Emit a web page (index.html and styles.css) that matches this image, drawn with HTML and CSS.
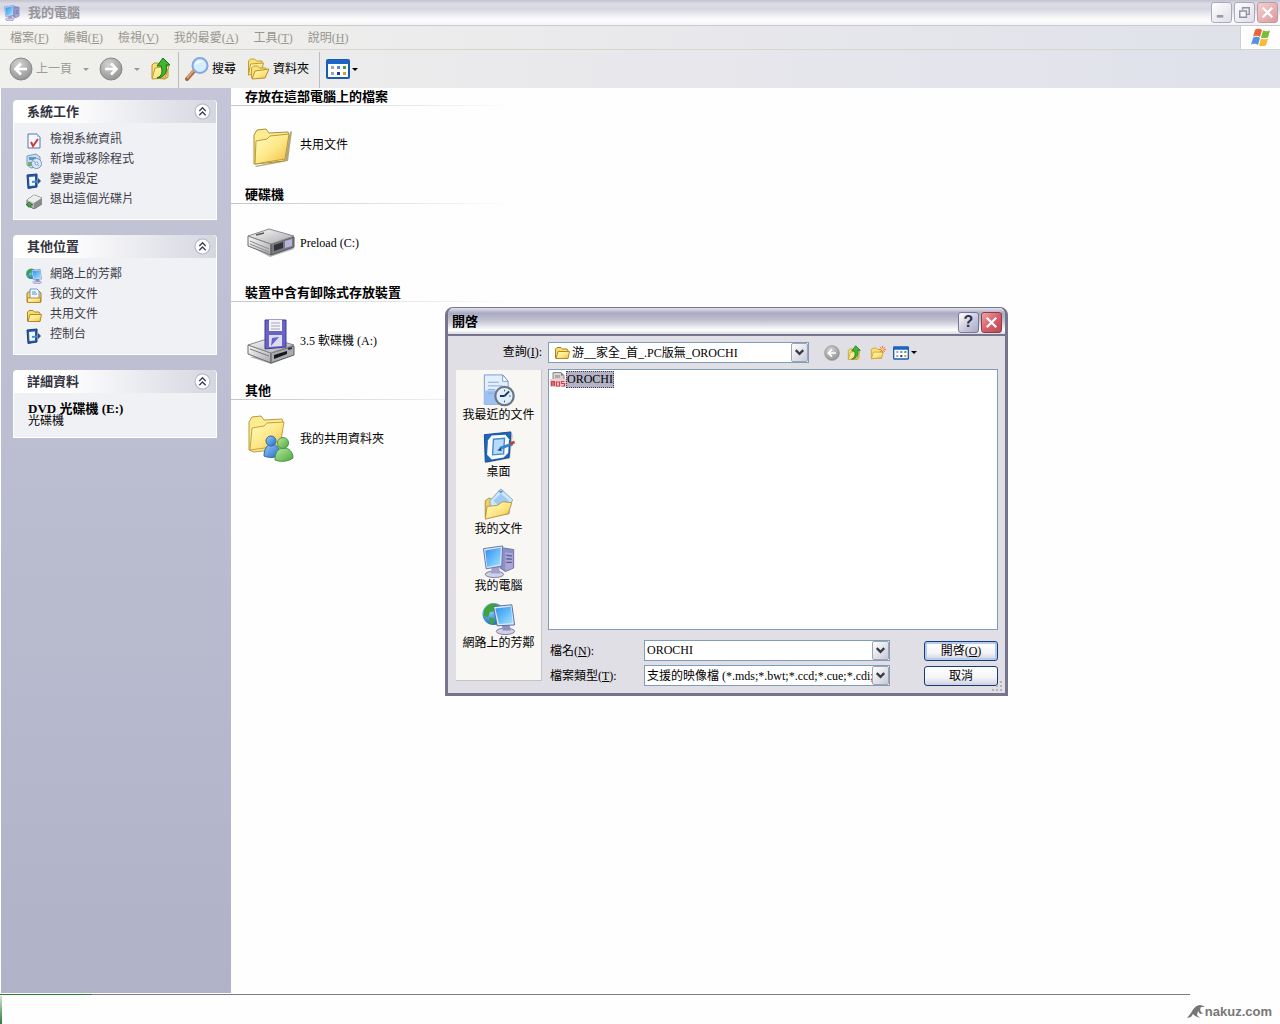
FILE: index.html
```
<!DOCTYPE html>
<html lang="zh-Hant">
<head>
    <meta charset="UTF-8">
    <meta name="viewport" content="width=device-width, initial-scale=1.0">
    <title>我的電腦</title>
    <link rel="stylesheet" href="styles.css">
</head>
<body>
    <!-- shared icons -->
    <svg class="sprite" width="0" height="0" aria-hidden="true">
        <defs>
            <linearGradient id="yellow" x1="0" y1="0" x2="1" y2="1"><stop offset="0" stop-color="#fffbc0"/><stop offset=".5" stop-color="#fde98a"/><stop offset="1" stop-color="#f3bd42"/></linearGradient>
            <linearGradient id="screen" x1="0" y1="0" x2="1" y2="1"><stop offset="0" stop-color="#2f8fee"/><stop offset="1" stop-color="#9ce4ff"/></linearGradient>
            <linearGradient id="metal" x1="0" y1="0" x2="1" y2="1"><stop offset="0" stop-color="#fbfbfb"/><stop offset="1" stop-color="#a9a9ad"/></linearGradient>
            <radialGradient id="grey" cx=".4" cy=".3" r=".8"><stop offset="0" stop-color="#d4d4d4"/><stop offset="1" stop-color="#8c8c8c"/></radialGradient>
            <radialGradient id="globe" cx=".35" cy=".3" r=".8"><stop offset="0" stop-color="#8fdcff"/><stop offset="1" stop-color="#1460b8"/></radialGradient>
            <linearGradient id="green" x1="0" y1="0" x2="1" y2="1"><stop offset="0" stop-color="#b9eaa0"/><stop offset="1" stop-color="#4aa83c"/></linearGradient>
            <linearGradient id="blue" x1="0" y1="0" x2="1" y2="1"><stop offset="0" stop-color="#9ccbfa"/><stop offset="1" stop-color="#1e6cc6"/></linearGradient>
        </defs>
        <symbol id="folder-big" viewBox="0 0 48 48">
            <path d="m8 45 30-6 5-28 2-1-4 30-32 6z" fill="#7d6a2a" opacity=".6"/>
            <path d="M7 43V14l3-5 9-1 3 4 19-1 1 3-5 26-28 3z" fill="#fbeb91" stroke="#a99034"/>
            <path d="M8 43 9 20l11-2 3-3 19-2-4 25z" fill="url(#yellow)" stroke="#c09a36"/>
        </symbol>
        <symbol id="folder" viewBox="0 0 16 16">
            <path d="M1.500 13V4l1.500-1.500h4L8.500 4H13l1 1.500V13z" fill="#f6dc6c" stroke="#a98420"/>
            <path d="M2 13.500 4 6.500h11.500L14 13.500z" fill="url(#yellow)" stroke="#b58a22"/>
        </symbol>
        <symbol id="back" viewBox="0 0 24 24">
            <circle cx="12" cy="12" r="11" fill="url(#grey)" stroke="#8a8a8a"/>
            <path d="M18 12H7M12 6.500 6.500 12l5.500 5.500" fill="none" stroke="#fff" stroke-width="2.600"/>
        </symbol>
        <symbol id="forward" viewBox="0 0 24 24">
            <circle cx="12" cy="12" r="11" fill="url(#grey)" stroke="#8a8a8a"/>
            <path d="M6 12h11M12 6.500l5.500 5.500-5.500 5.500" fill="none" stroke="#fff" stroke-width="2.600"/>
        </symbol>
        <symbol id="up" viewBox="0 0 24 24">
            <path d="M2 21V8l2-2h4l2 2h8v12l-3 2z" fill="#f7df70" stroke="#b9932c"/>
            <path d="M2 22 5 11l14-2-4 12z" fill="url(#yellow)" stroke="#c09a36"/>
            <path d="M7 21c5-2 6-6 4-12H7l6-8 7 7h-4c2 7-2 13-9 13z" fill="#3fb534" stroke="#17701a"/>
        </symbol>
        <symbol id="search" viewBox="0 0 24 24">
            <path d="M2 22 9 14" stroke="#a6673d" stroke-width="4" stroke-linecap="round"/>
            <path d="M2 21 9 13" stroke="#e0a077" stroke-width="2"/>
            <circle cx="15" cy="8.500" r="7.500" fill="#d4efff" stroke="#86a7dc" stroke-width="2"/>
            <path d="M10 8c1-4 5-5 8-3-4 0-5 2-8 3z" fill="#fff"/>
        </symbol>
        <symbol id="folders" viewBox="0 0 24 24">
            <path d="M2.500 18V4l2-2h4l2 2H16v4z" fill="#f8e27c" stroke="#c49c34"/>
            <path d="m2.500 18 2-11 13-1-2 9z" fill="url(#yellow)" stroke="#c49c34"/>
            <path d="M5.500 21V11l2-2h4l2 2H20v3" fill="#f8e27c" stroke="#c49c34"/>
            <path d="m6 22 3-8 14-2-4 9z" fill="url(#yellow)" stroke="#c08e2a"/>
        </symbol>
        <symbol id="views" viewBox="0 0 24 20">
            <rect x="1" y="1" width="22" height="18" rx="1" fill="#fff" stroke="#1a5cb4" stroke-width="2"/>
            <path d="M1 1h22v4H1z" fill="#1d64c4"/>
            <path d="M5 7h3v3H5zM5 13h3v3H5z" fill="#9aa4b4"/><path d="M11 7h3v3h-3z" fill="#5f89d4"/><path d="M11 13h3v3h-3z" fill="#1f3c9c"/><path d="M17 7h3v3h-3z" fill="#36a844"/><path d="M17 13h3v3h-3z" fill="#d0a040"/>
        </symbol>
        <symbol id="newfolder" viewBox="0 0 18 16">
            <path d="M1.500 14V4L3 2.500h4L8.500 4H13v10z" fill="#f7df76" stroke="#d2a232"/>
            <path d="M1.500 14.500 4 7h11l-2 6.500z" fill="url(#yellow)" stroke="#d2a232"/>
            <path d="M14 0v8M10 4h8M11 1l6 6M17 1l-6 6" stroke="#e87434"/><circle cx="14" cy="4" r="1.500" fill="#ffd070"/>
        </symbol>
        <symbol id="computer" viewBox="0 0 36 36">
            <path d="m21 3 13 2v20l-9 4-6-4z" fill="#8f8fc8" stroke="#6c6ca4"/><path d="m25 8 8 1v16l-8 3z" fill="#a9a9d8"/>
            <path d="m26 11 6 1M26 15l6 .5M26 19h6" stroke="#5c5c96" stroke-width="1.500"/>
            <ellipse cx="13" cy="32" rx="10" ry="3.500" fill="#d0d0e6" stroke="#7676a0"/>
            <path d="m10 24 8-1 1 8H9z" fill="#a0a0cc"/>
            <path d="m1 4 21-3-1 22-17 3z" fill="#d9e4f4" stroke="#5c70ac"/><path d="m3 6 17-3-1 18-14 3z" fill="url(#screen)"/>
        </symbol>
        <symbol id="network" viewBox="0 0 36 36">
            <circle cx="12" cy="13" r="12" fill="url(#globe)"/>
            <path d="M2 8c4-7 12-8 15-4l-4 6-5 1-2 6-5-2zM7 17l6 1-1 6H9z" fill="#3ea33a"/>
            <ellipse cx="25" cy="32" rx="10" ry="3.500" fill="#d0d0e6" stroke="#7676a0"/>
            <path d="m21 24 8-1 2 8h-9z" fill="#8f8fc2"/>
            <path d="m12 5 20-2 3 22-19 1z" fill="#e0e8f6" stroke="#4c64a0"/><path d="m14 7 17-2 2 18-15 1z" fill="url(#screen)"/>
        </symbol>
        <symbol id="recent" viewBox="0 0 36 36">
            <path d="M2 1h20l6 7v25H2z" fill="#e3efff" stroke="#7795cc"/><path d="M2 18h15v15H2z" fill="#9cc2f4"/><path d="m22 1 6 7h-6z" fill="#fff" stroke="#7795cc"/>
            <path d="M6 9h12M6 13h16M6 17h8M6 21h6" stroke="#86a4dc"/>
            <circle cx="24" cy="24" r="10" fill="#f4f8fc" stroke="#6d7786" stroke-width="2.500"/><circle cx="24" cy="24" r="8" fill="#dcefff"/>
            <path d="m24 24 5-5M24 24h-5" stroke="#22345c" stroke-width="2"/><path d="M24 17v2M24 29v2M29 24h2" stroke="#46587c"/>
        </symbol>
        <symbol id="desktop" viewBox="0 0 36 36">
            <path d="m4 35 26-5 3-26-2-2v2z" fill="#888" opacity=".5"/>
            <path d="m2 4 29-3-2 28-26 5z" fill="#1d66bc" stroke="#12468e"/><path d="m10 5 15-1 4 5-1 15-5 5-13 2-5-5 1-16z" fill="#f8fcff"/>
            <path d="m12 9 12-1-1 17-12 1z" fill="#b7dcfb" stroke="#4a86c8" stroke-width="1.500"/>
            <path d="m19 19 14-5" stroke="#3484cc" stroke-width="3"/><path d="m30 14 5-2" stroke="#c43c34" stroke-width="3"/><path d="m16 21 4-3 1 4z" fill="#18508c"/>
        </symbol>
        <symbol id="documents" viewBox="0 0 36 36">
            <path d="M3 32V14l4-3 5 2 17-1v16z" fill="#f0d264" stroke="#a98a34"/>
            <path d="m8 14 12-13 13 12-9 15-15-3z" fill="#cde7fc" stroke="#7ba1ca"/><path d="m12 14 8-8 9 8-8 9z" fill="#9fcbf2"/><path d="m17 3 6 0-3 3z" fill="#6795c8"/>
            <path d="M3 34 5 20l11-1 6-4 10 1-4 12z" fill="url(#yellow)" stroke="#b7923a"/>
        </symbol>
        <symbol id="hdd" viewBox="0 0 48 48">
            <path d="m2 27 21 11 24-8-1-3-23 9z" fill="#666" opacity=".5"/>
            <path d="M1 17 24 25v11L1 27z" fill="url(#metal)" stroke="#6c6c6c"/><path d="m24 25 23-7v10l-23 8z" fill="#777b80" stroke="#55575a"/>
            <path d="M1 17 22 10l25 7-23 8z" fill="url(#metal)" stroke="#8a8a8c"/><path d="m3 22 19 8M3 25l19 8" stroke="#8e8e92"/>
            <path d="m27 26 9-3v6l-9 3z" fill="#303236"/><path d="m38 22 7-2v7l-7 2z" fill="#b6b4dc"/><path d="m9 16 8-2" stroke="#555" stroke-width="1.500"/>
        </symbol>
        <symbol id="floppy" viewBox="0 0 48 48">
            <path d="m3 40 21 7 23-9-1-2z" fill="#666" opacity=".5"/>
            <path d="m1 28 23 8v10L1 37z" fill="url(#metal)" stroke="#6c6c6c"/><path d="m24 36 23-7v9l-23 8z" fill="#a9abb0" stroke="#5d5f62"/>
            <path d="m1 28 22-7 24 7-23 8z" fill="url(#metal)" stroke="#87878a"/><path d="m3 32 19 7" stroke="#77787c"/>
            <path d="m27 38 13-4v3l-13 5z" fill="#17181a"/><path d="m41 32 4-1" stroke="#334" stroke-width="2"/>
            <path d="M18 3h21v27l-21 2z" fill="#6963c8" stroke="#403c94"/><path d="M22 3h13v11H22z" fill="#f5f4fa"/><path d="M24 6h9M24 9h9M24 12h9" stroke="#a5a3b4"/>
            <path d="M22 18h13v11l-13 1z" fill="#dddcf2"/><path d="m24 29 1-8 7-1z" fill="#6963c8"/>
        </symbol>
        <symbol id="people" viewBox="0 0 48 48">
            <path d="M2 35V7l3-5 9-1 3 4 18-1 1 3-4 27-25 3z" fill="#fbeb91" stroke="#b79b3f"/><path d="m3 35 2-22 12-2 3-3 17-1-4 24z" fill="url(#yellow)" stroke="#c8a040"/>
            <path d="M17 41c0-8 4-12 8-12s8 4 8 11c-4 3-12 3-16 1z" fill="url(#blue)" stroke="#2d68a8"/><circle cx="24" cy="26" r="5" fill="url(#blue)" stroke="#2d68a8"/>
            <path d="M28 45c0-9 4-12 9-12s9 4 9 10c-5 4-13 4-18 2z" fill="url(#green)" stroke="#4c9348"/><circle cx="36" cy="28" r="5.500" fill="url(#green)" stroke="#4c9348"/>
        </symbol>
        <symbol id="sysinfo" viewBox="0 0 16 16">
            <path d="M2 1h9l3 3v11H2z" fill="#f4f8ff" stroke="#5a74a8"/><path d="m11 1 3 3h-3z" fill="#a8c0e8"/><path d="m5 9 2 4 5-7" fill="none" stroke="#d03a30" stroke-width="2"/>
        </symbol>
        <symbol id="programs" viewBox="0 0 16 16">
            <path d="m1 3 9-2 4 3v9l-9 2-4-3z" fill="#c9ddec" stroke="#8098b8"/><path d="M3 4h7v3H3z" fill="#5c98d0"/><path d="M2 9h4v4H2z" fill="#72ac6e"/>
            <circle cx="10.500" cy="10.500" r="5" fill="#dfe8f5" stroke="#7894c0"/><circle cx="10.500" cy="10.500" r="1.500" fill="#fff" stroke="#7894c0"/><path d="m7 8 2 1M13 13l-1-1" stroke="#6aaee2"/>
        </symbol>
        <symbol id="settings" viewBox="0 0 16 16">
            <path d="m1 2 10-1v13L2 15.500z" fill="#245ca6" stroke="#173d7a"/><path d="m3 4 6-.5v9L3.500 13z" fill="#f2f9ff"/><path d="m6 9 8-1" stroke="#4c8ccc" stroke-width="2"/><path d="m12 5 3 3-3 3z" fill="#2a5288"/>
        </symbol>
        <symbol id="eject" viewBox="0 0 16 16">
            <path d="m1 7 7-5 8 3v6l-8 5-7-4z" fill="#b9b9b9" stroke="#6a6a6a"/><path d="m1 7 7-5 8 3-8 5z" fill="#ededed"/><path d="m8 10 8-5v6l-8 5z" fill="#8a8a8a"/><path d="m0 12 3-3 4 3H5v2H2v-2z" fill="#4b9f45" stroke="#225c28" stroke-width=".6"/>
        </symbol>
        <symbol id="docfolder" viewBox="0 0 16 16">
            <path d="M1 14V5l3-2h9l2 2v9z" fill="#f2d164" stroke="#a98024"/><path d="M4 1h7l2 2v8H4z" fill="#f2f8ff" stroke="#7898c8"/><path d="M6 4h4M6 6h5" stroke="#5c8cd0"/><path d="M1.500 14.500V10h13v4.500z" fill="url(#yellow)" stroke="#b88c28"/>
        </symbol>
        <symbol id="mds" viewBox="0 0 16 16">
            <path d="M3 .5h8l3 3v8H3z" fill="#d4d4d6" stroke="#8a8a8e"/><path d="m11 .5 3 3h-3z" fill="#77777c"/><path d="M5 3h5v3H5z" fill="#b0a8ac"/>
            <path d="M0 7h16v8H0z" fill="#f6ccd0"/><path d="M1.500 14V9.500h3V14M3 10v4M6.500 9.500V14h3v-4h-3M14.500 9.500h-3v2h3V14h-3" fill="none" stroke="#c44650" stroke-width="1.200"/>
        </symbol>
        <symbol id="chevrons" viewBox="0 0 16 16">
            <circle cx="8" cy="8" r="7" fill="#fff" stroke="#b5b5c8"/><path d="m5 7.500 3-3 3 3M5 11.500l3-3 3 3" fill="none" stroke="#3c3c64" stroke-width="1.300"/>
        </symbol>
        <symbol id="cross" viewBox="0 0 20 20"><path d="m5 5 10 10M15 5 5 15" stroke="#fff" stroke-width="2.400"/></symbol>
        <symbol id="drop" viewBox="0 0 16 18"><path d="m4 6.500 4 4 4-4" fill="none" stroke="#3a3a44" stroke-width="2.400"/></symbol>
        <symbol id="flag" viewBox="0 0 20 20">
            <path d="M4 2c3-2 5-1 7 0l-2 7c-2-1-4-2-7 0z" fill="#ea6437"/><path d="M12 2.500c3 1 4 1 7 0l-2 7c-3 1-5 1-7 0z" fill="#7bbc3c"/><path d="M2 10c3-2 5-1 7 0l-2 7c-2-1-4-2-7 0z" fill="#5790dc"/><path d="M10 10.500c3 1 4 1 7 0l-2 7c-3 1-5 1-7 0z" fill="#f5bc34"/>
        </symbol>
    </svg>

    <div class="window">
        <header class="titlebar inactive">
            <svg class="icon16"><use href="#computer"/></svg>
            <h1>我的電腦</h1>
            <button class="caption" aria-label="最小化"><svg viewBox="0 0 20 20"><path d="M5 14h7" stroke="#fff" stroke-width="4"/><path d="M5 14h7" stroke="#9a9aa8" stroke-width="3"/></svg></button>
            <button class="caption" aria-label="還原"><svg viewBox="0 0 20 20"><path d="M8 7V5h7v7h-3" fill="none" stroke="#9292a2" stroke-width="1.500"/><path d="M5 8.500h7V15H5z" fill="#f6f6fa" stroke="#9292a2" stroke-width="1.500"/></svg></button>
            <button class="caption close" aria-label="關閉"><svg><use href="#cross"/></svg></button>
        </header>

        <nav class="menubar">
            <button>檔案(<u>F</u>)</button>
            <button>編輯(<u>E</u>)</button>
            <button>檢視(<u>V</u>)</button>
            <button>我的最愛(<u>A</u>)</button>
            <button>工具(<u>T</u>)</button>
            <button>說明(<u>H</u>)</button>
            <span class="brand"><svg><use href="#flag"/></svg></span>
        </nav>

        <div class="toolbar">
            <button class="tool off"><svg><use href="#back"/></svg>上一頁</button>
            <button class="more off" aria-label="上一頁清單"></button>
            <button class="tool off" aria-label="下一頁"><svg><use href="#forward"/></svg></button>
            <button class="more off" aria-label="下一頁清單"></button>
            <button class="tool" aria-label="往上"><svg><use href="#up"/></svg></button>
            <span class="sep"></span>
            <button class="tool"><svg><use href="#search"/></svg>搜尋</button>
            <button class="tool folders"><svg><use href="#folders"/></svg>資料夾</button>
            <span class="sep"></span>
            <button class="tool views" aria-label="檢視"><svg><use href="#views"/></svg><i></i></button>
        </div>

        <div class="explorer">
            <aside class="sidebar">
                <section class="panel">
                    <h2>系統工作<button aria-label="收合"><svg><use href="#chevrons"/></svg></button></h2>
                    <ul>
                        <li><a href="#"><svg><use href="#sysinfo"/></svg>檢視系統資訊</a></li>
                        <li><a href="#"><svg><use href="#programs"/></svg>新增或移除程式</a></li>
                        <li><a href="#"><svg><use href="#settings"/></svg>變更設定</a></li>
                        <li><a href="#"><svg><use href="#eject"/></svg>退出這個光碟片</a></li>
                    </ul>
                </section>
                <section class="panel">
                    <h2>其他位置<button aria-label="收合"><svg><use href="#chevrons"/></svg></button></h2>
                    <ul>
                        <li><a href="#"><svg><use href="#network"/></svg>網路上的芳鄰</a></li>
                        <li><a href="#"><svg><use href="#docfolder"/></svg>我的文件</a></li>
                        <li><a href="#"><svg><use href="#folder"/></svg>共用文件</a></li>
                        <li><a href="#"><svg><use href="#settings"/></svg>控制台</a></li>
                    </ul>
                </section>
                <section class="panel">
                    <h2>詳細資料<button aria-label="收合"><svg><use href="#chevrons"/></svg></button></h2>
                    <div class="details">
                        <strong>DVD 光碟機 (E:)</strong>
                        <p>光碟機</p>
                    </div>
                </section>
            </aside>

            <main class="content">
                <section class="group">
                    <h2>存放在這部電腦上的檔案</h2>
                    <a href="#"><svg><use href="#folder-big"/></svg>共用文件</a>
                </section>
                <section class="group">
                    <h2>硬碟機</h2>
                    <a href="#"><svg><use href="#hdd"/></svg>Preload (C:)</a>
                </section>
                <section class="group">
                    <h2>裝置中含有卸除式存放裝置</h2>
                    <a href="#"><svg><use href="#floppy"/></svg>3.5 軟碟機 (A:)</a>
                </section>
                <section class="group">
                    <h2>其他</h2>
                    <a href="#"><svg><use href="#people"/></svg>我的共用資料夾</a>
                </section>
            </main>
        </div>
    </div>

    <footer class="taskbar">
        <span class="start"></span>
        <span class="logo"><svg viewBox="0 0 18 16"><path d="M0 14 4 9c2-4 5-8 9-8 2 0 3 1 5 2l-4 0c-1 2-1 3 0 5 1 1 2 1 3 1l-4 1-2-3-1 4 3 3-5-2-2-2-2 3-4 1z" fill="#777"/></svg>nakuz.com</span>
    </footer>

    <div class="dialog" role="dialog" aria-labelledby="dialog-title">
        <header class="titlebar">
            <h1 id="dialog-title">開啓</h1>
            <button class="caption help" aria-label="說明">?</button>
            <button class="caption close" aria-label="關閉"><svg><use href="#cross"/></svg></button>
        </header>
        <form class="dialog-body">
            <label class="lookin-label" for="lookin">查詢(<u>I</u>):</label>
            <div class="lookin">
                <div class="combo with-icon">
                    <svg class="icon16"><use href="#folder"/></svg>
                    <select id="lookin"><option>游__家全_首_.PC版無_OROCHI</option></select>
                    <span class="arrow"><svg><use href="#drop"/></svg></span>
                </div>
                <button type="button" class="mini" aria-label="上一個資料夾"><svg><use href="#back"/></svg></button>
                <button type="button" class="mini" aria-label="往上一層"><svg><use href="#up"/></svg></button>
                <button type="button" class="mini" aria-label="建立新資料夾"><svg><use href="#newfolder"/></svg></button>
                <button type="button" class="mini views" aria-label="檢視功能表"><svg><use href="#views"/></svg><i></i></button>
            </div>
            <nav class="places">
                <a href="#"><svg><use href="#recent"/></svg>我最近的文件</a>
                <a href="#"><svg><use href="#desktop"/></svg>桌面</a>
                <a href="#"><svg><use href="#documents"/></svg>我的文件</a>
                <a href="#"><svg><use href="#computer"/></svg>我的電腦</a>
                <a href="#"><svg><use href="#network"/></svg>網路上的芳鄰</a>
            </nav>
            <div class="pick">
                <ul class="files">
                    <li><button type="button"><svg class="icon16"><use href="#mds"/></svg><span>OROCHI</span></button></li>
                </ul>
                <div class="fields">
                    <label for="filename">檔名(<u>N</u>):</label>
                    <div class="combo">
                        <input type="text" id="filename" value="OROCHI">
                        <span class="arrow"><svg><use href="#drop"/></svg></span>
                    </div>
                    <button class="push default">開啓(<u>O</u>)</button>
                    <label for="filetype">檔案類型(<u>T</u>):</label>
                    <div class="combo">
                        <select id="filetype"><option>支援的映像檔 (*.mds;*.bwt;*.ccd;*.cue;*.cdi;</option></select>
                        <span class="arrow"><svg><use href="#drop"/></svg></span>
                    </div>
                    <button type="button" class="push">取消</button>
                </div>
            </div>
        </form>
        <svg class="grip" viewBox="0 0 12 12"><path d="M9 1h2v2H9zM5 5h2v2H5zM9 5h2v2H9zM1 9h2v2H1zM5 9h2v2H5zM9 9h2v2H9z" fill="#b4b4b8"/></svg>
    </div>
</body>
</html>
```
FILE: styles.css
```
* {
  box-sizing: border-box;
}

body {
  margin: 0;
  height: 100vh;
  display: flex;
  flex-direction: column;
  background: #fefefe;
  color: #000;
  font: 12px/16px "Liberation Serif", "Noto Sans CJK TC", serif;
  overflow: hidden;
}

h1, h2, p, ul {
  margin: 0;
  padding: 0;
  font-size: 13px;
  list-style: none;
}

button, input, select {
  margin: 0;
  padding: 0;
  border: 0;
  background: none;
  color: inherit;
  font: inherit;
}

a {
  color: inherit;
  text-decoration: none;
}

u {
  text-underline-offset: 1px;
}

svg {
  display: block;
  flex: none;
}

.sprite {
  position: absolute;
}

.icon16 {
  width: 16px;
  height: 16px;
}

.window {
  flex: 1;
  min-height: 0;
  display: flex;
  flex-direction: column;
}

/* title bars */
.titlebar {
  display: flex;
  align-items: center;
  gap: 2px;
  height: 28px;
  padding: 2px 3px 0 4px;
  background: linear-gradient(#e4e4ee, #a9a9c1 20%, #c4c4d4 50%, #fff 85%, #d8d8e2);
  border-bottom: 2px solid #77758e;
}

.titlebar h1 {
  flex: 1;
  line-height: 20px;
}

.titlebar.inactive {
  height: 26px;
  padding: 0 2px 0 4px;
  border-bottom: 1px solid #c9c9d0;
  background: linear-gradient(#c2c2d0, #dcdce6 15%, #d6d6e2 35%, #fff 80%, #f4f4f8);
  color: #98969c;
}

.titlebar.inactive h1 {
  padding-left: 6px;
}

.caption {
  width: 21px;
  height: 21px;
  border: 1px solid #76769a;
  border-radius: 3px;
  background: linear-gradient(135deg, #fff, #c7c7da 60%, #a9a9c4);
  color: #2f2f4c;
  font: bold 16px/18px "Liberation Sans", sans-serif;
}

.caption svg {
  width: 19px;
  height: 19px;
}

.caption.close {
  background: linear-gradient(135deg, #f0a4a4, #d9606a 50%, #c04850);
  border-color: #8a3e4c;
}

.inactive .caption {
  border-color: #a9a9b8;
  background: linear-gradient(135deg, #fff, #dedee8);
}

.inactive .caption.close {
  border-color: #bf9aa2;
  background: linear-gradient(135deg, #f2d0d0, #dd9a9c);
}

/* menu and tool bars */
.menubar {
  display: flex;
  align-items: center;
  gap: 15px;
  height: 24px;
  padding-left: 10px;
  background: linear-gradient(90deg, #f2f1ec, #e9e9ec 50%, #dfe1ea);
  border-bottom: 1px solid #d6d6ca;
  color: #98968e;
}

.brand {
  align-self: stretch;
  margin-left: auto;
  width: 40px;
  display: flex;
  align-items: center;
  justify-content: center;
  background: #fff;
  border-left: 1px solid #cfcfd2;
}

.brand svg {
  width: 20px;
  height: 20px;
}

.toolbar {
  display: flex;
  align-items: center;
  height: 38px;
  padding-left: 9px;
  background: linear-gradient(90deg, #f0f0ec, #e8e8ec 50%, #dfe1eb);
}

.tool {
  display: flex;
  align-items: center;
  gap: 3px;
}

.tool svg {
  width: 24px;
  height: 24px;
}

.off {
  color: #9b9a94;
}

.tool.folders {
  margin-left: 10px;
}

.more {
  width: 27px;
  display: flex;
  justify-content: center;
}

.more::before,
.views i {
  content: "";
  border: 3px solid transparent;
  border-top-color: currentColor;
  border-bottom: 0;
}

.sep {
  align-self: stretch;
  width: 1px;
  margin: 2px 6px 0 4px;
  background: #bcbcbe;
}

.folders + .sep {
  margin-left: 10px;
}

.views {
  display: flex;
  align-items: center;
  gap: 2px;
}

/* explorer */
.explorer {
  flex: 1;
  min-height: 0;
  display: flex;
  padding: 0 0 1px 1px;
}

.sidebar {
  width: 230px;
  padding: 12px 14px 12px 12px;
  display: flex;
  flex-direction: column;
  gap: 15px;
  background: linear-gradient(#c4c5d6, #b0b2c8);
}

.panel {
  background: #f0f1f5;
  border: 1px solid #fff;
  border-top: 0;
  border-radius: 4px 4px 0 0;
  color: #3c3c48;
}

.panel h2 {
  display: flex;
  align-items: center;
  justify-content: space-between;
  height: 23px;
  padding: 0 5px 0 13px;
  background: linear-gradient(90deg, #fff 25%, #d5d6e0);
  border-radius: 4px 4px 0 0;
  color: #333340;
}

.panel h2 svg {
  width: 17px;
  height: 17px;
}

.panel ul {
  padding: 6px 12px 10px;
  font-size: 12px;
}

.panel li a {
  display: flex;
  gap: 8px;
  height: 20px;
  line-height: 20px;
}

.panel li svg {
  width: 16px;
  height: 16px;
  margin-top: 4px;
}

.details {
  padding: 10px 14px;
  color: #000;
  font-size: 13px;
  line-height: 12px;
}

.details p {
  font-size: 12px;
}

.content {
  flex: 1;
  background: #fefefe;
}

.group h2 {
  width: 285px;
  height: 18px;
  padding-left: 14px;
  line-height: 18px;
  border-bottom: 1px solid;
  border-image: linear-gradient(90deg, #c4c4cc, #fefefe) 1;
}

.group a {
  display: flex;
  align-items: center;
  gap: 5px;
  width: 285px;
  height: 80px;
  padding: 0 0 2px 16px;
}

.group svg {
  width: 48px;
  height: 48px;
}

/* task bar */
.taskbar {
  display: flex;
  justify-content: space-between;
  height: 30px;
  background: linear-gradient(90deg, #2c7a2c 92px, #7c7c84 92px) no-repeat 0 0 / calc(100% - 90px) 1px;
}

.start {
  width: 2px;
  margin-top: 2px;
  background: linear-gradient(#cfe4cf, #2f7a3c);
}

.logo {
  display: flex;
  align-items: center;
  padding: 5px 8px 0 0;
  color: #777;
  font: bold 13px/16px "Liberation Sans", sans-serif;
}

.logo svg {
  width: 18px;
  height: 16px;
}

/* open file dialog */
.dialog {
  position: absolute;
  left: 445px;
  top: 307px;
  width: 563px;
  border: 3px solid #77758e;
  border-top-width: 1px;
  border-radius: 8px 8px 0 0;
  background: #e0dfe5;
  overflow: hidden;
}

/* light line inside the frame */
.dialog::after {
  content: "";
  position: absolute;
  inset: 28px -2px -2px;
  border: 1px solid #d9d9e6;
  border-top: 0;
  pointer-events: none;
}

.dialog-body {
  display: grid;
  grid-template-columns: 86px 1fr;
  gap: 6px;
  padding: 6px 7px 7px 8px;
}

.lookin-label {
  text-align: right;
  line-height: 21px;
}

.lookin {
  display: flex;
  align-items: center;
}

.lookin .combo {
  width: 261px;
  margin-right: 15px;
}

.combo {
  position: relative;
  display: flex;
  align-items: center;
  height: 21px;
  border: 1px solid #7f9db9;
  background: #fff;
}

.combo.with-icon {
  padding-left: 5px;
}

.combo input,
.combo select {
  flex: 1;
  min-width: 0;
  height: 19px;
  padding: 0 16px 0 2px;
  appearance: none;
  outline: 0;
}

.arrow {
  position: absolute;
  top: 0;
  right: 0;
  width: 17px;
  height: 19px;
  border: 1px solid #a3a3b8;
  border-radius: 2px;
  background: linear-gradient(135deg, #fff, #c9c9d8);
  pointer-events: none;
}

.arrow svg {
  width: 15px;
  height: 17px;
}

.mini {
  margin-right: 7px;
}

.mini svg {
  width: 16px;
  height: 16px;
}

.places {
  display: flex;
  flex-direction: column;
  margin: 1px 0 5px;
  padding-top: 4px;
  background: #f8f7f3;
  border-right: 1px solid #c4c4c4;
  border-bottom: 1px solid #c4c4c4;
}

.places a {
  display: flex;
  flex-direction: column;
  align-items: center;
  height: 57px;
}

.places svg {
  width: 34px;
  height: 33px;
}

.pick {
  display: flex;
  flex-direction: column;
  gap: 10px;
}

.files {
  height: 261px;
  padding: 1px;
  border: 1px solid #7f9db9;
  background: #fff;
  font-size: 12px;
}

.files button {
  display: flex;
  align-items: center;
}

.files span {
  border: 1px dotted #44445c;
  background: #b3b3c5;
  line-height: 15px;
}

.fields {
  display: grid;
  grid-template-columns: 94px 246px 1fr;
  align-items: center;
  row-gap: 4px;
  padding-left: 2px;
}

.push {
  justify-self: end;
  width: 74px;
  height: 20px;
  border: 1px solid #173c78;
  border-radius: 3px;
  background: linear-gradient(#fff, #f4f4f8 60%, #cfd0de);
}

.push.default {
  box-shadow: inset 0 0 0 2px #b4cbf2;
}

.grip {
  position: absolute;
  right: 2px;
  bottom: 1px;
  width: 12px;
  height: 12px;
}
```
